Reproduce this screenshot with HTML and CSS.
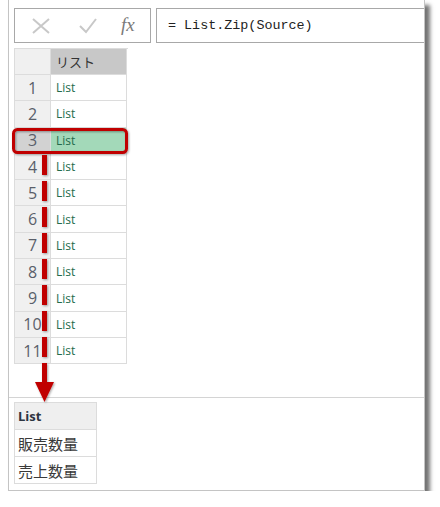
FILE: index.html
```html
<!DOCTYPE html>
<html lang="ja">
  <head>
    <meta charset="UTF-8" />
    <title>List.Zip</title>
    <link rel="stylesheet" href="styles.css">
  </head>
  <body>
    <div class="frame">
      <div class="formula-bar">
        <div class="formula-icons">
          <svg class="icon" width="20" height="16" viewBox="0 0 20 16">
            <path d="M2 1 L18 15 M18 1 L2 15" stroke="#c8c8c8" stroke-width="2" fill="none" />
          </svg>
          <svg class="icon" width="20" height="16" viewBox="0 0 20 16">
            <path d="M2 8 L8 14 L18 1" stroke="#c8c8c8" stroke-width="2" fill="none" />
          </svg>
          <span class="fx">fx</span>
        </div>
        <div class="formula-text">= List.Zip(Source)</div>
      </div>

      <div class="preview">
        <div class="grid">
          <div class="cell num head"></div>
          <div class="cell col-head">リスト</div>
          <div class="cell num">1</div><div class="cell val">List</div>
          <div class="cell num">2</div><div class="cell val">List</div>
          <div class="cell num sel">3</div><div class="cell val sel">List</div>
          <div class="cell num">4</div><div class="cell val">List</div>
          <div class="cell num">5</div><div class="cell val">List</div>
          <div class="cell num">6</div><div class="cell val">List</div>
          <div class="cell num">7</div><div class="cell val">List</div>
          <div class="cell num">8</div><div class="cell val">List</div>
          <div class="cell num">9</div><div class="cell val">List</div>
          <div class="cell num">10</div><div class="cell val">List</div>
          <div class="cell num">11</div><div class="cell val">List</div>
        </div>
      </div>

      <div class="result">
        <div class="result-grid">
          <div class="rcell rhead">List</div>
          <div class="rcell">販売数量</div>
          <div class="rcell">売上数量</div>
        </div>
      </div>
    </div>

    <!-- 선택 표시와 화살표 -->
    <svg class="overlay" width="440" height="507" viewBox="0 0 440 507">
      <defs>
        <filter id="soft" x="-50%" y="-50%" width="200%" height="200%">
          <feDropShadow dx="1" dy="1" stdDeviation="1.2" flood-color="#000" flood-opacity="0.35" />
        </filter>
      </defs>
      <rect x="13.5" y="129.5" width="113" height="23" rx="4" ry="4"
            fill="none" stroke="#c00000" stroke-width="3" filter="url(#soft)" />
      <g filter="url(#soft)">
        <line x1="44.5" y1="155" x2="44.5" y2="383" stroke="#c00000"
              stroke-width="5" stroke-dasharray="20 6" />
        <polygon points="35,382 54,382 44.5,402" fill="#c00000" />
      </g>
    </svg>
  </body>
</html>
```
FILE: styles.css
```css
body {
  margin: 0;
  background-color: #fff;
  font-family: 'Open Sans', 'Noto Sans', 'Noto Sans CJK JP', sans-serif;
}
.frame {
  box-sizing: border-box;
  margin-left: 8px;
  width: 417px;
  height: 491px;
  border: 1px solid #c4c4c4;
  border-top: none;
  background-color: #fff;
  box-shadow: 5px 5px 4px rgba(0, 0, 0, 0.55);
  overflow: hidden;
  display: flex;
  flex-direction: column;
}
.formula-bar {
  display: flex;
  gap: 5px;
  padding: 8px 0 0 5px;
}
.formula-icons {
  box-sizing: border-box;
  width: 137px;
  height: 35px;
  border: 1px solid #a8a8a8;
  display: flex;
  align-items: center;
  padding-left: 16px;
}
.icon {
  display: block;
}
.formula-icons .icon:nth-child(2) {
  margin-left: 27px;
}
.fx {
  margin-left: 23px;
  font-family: 'Liberation Serif', serif;
  font-style: italic;
  font-size: 19px;
  color: #7a7a7a;
  line-height: 1;
  margin-top: -3px;
}
.formula-text {
  box-sizing: border-box;
  flex: 1;
  height: 35px;
  border: 1px solid #a8a8a8;
  border-right: none;
  padding-left: 11px;
  display: flex;
  align-items: center;
  font-family: 'Liberation Mono', monospace;
  font-size: 13.4px;
  color: #222;
}
.preview {
  height: 354px;
  padding: 5px 0 0 5px;
  box-sizing: border-box;
}
.grid {
  display: grid;
  grid-template-columns: 36px 76px;
  grid-template-rows: 26px;
  grid-auto-rows: 26.3px;
  width: 113px;
  border-left: 1px solid #dcdcdc;
  border-top: 1px solid #dcdcdc;
}
.cell {
  box-sizing: border-box;
  border-right: 1px solid #dcdcdc;
  border-bottom: 1px solid #dcdcdc;
  display: flex;
  align-items: center;
}
.num {
  background-color: #f0f0f0;
  justify-content: center;
  font-size: 16px;
  color: #5a5f6a;
}
.col-head {
  background-color: #c8c8c8;
  padding-left: 5px;
  font-size: 13px;
  color: #333;
}
.val {
  padding-left: 5px;
  font-size: 12px;
  color: #236b4c;
}
.num.sel {
  background-color: #d2d2d2;
}
.val.sel {
  background-color: #a3d9b9;
}
.result {
  flex: 1;
  border-top: 1px solid #d4d4d4;
  padding: 4px 0 0 5px;
}
.result-grid {
  width: 82px;
  border-left: 1px solid #dcdcdc;
  border-top: 1px solid #dcdcdc;
}
.rcell {
  box-sizing: border-box;
  height: 27px;
  border-right: 1px solid #dcdcdc;
  border-bottom: 1px solid #dcdcdc;
  display: flex;
  align-items: center;
  padding-left: 3px;
  font-size: 15px;
  color: #3a3a3a;
}
.rhead {
  background-color: #efefef;
  font-size: 13px;
  font-weight: 700;
  color: #2d3440;
}
.overlay {
  position: absolute;
  left: 0;
  top: 0;
  pointer-events: none;
}
```
